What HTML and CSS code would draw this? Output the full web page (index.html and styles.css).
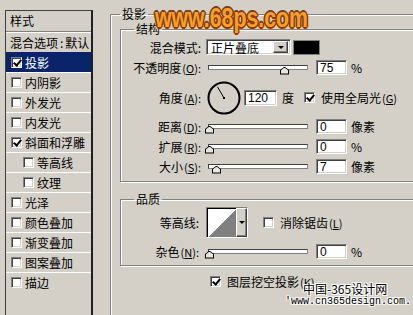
FILE: index.html
```html
<!DOCTYPE html>
<html lang="zh-CN">
<head>
    <meta charset="UTF-8">
    <title>图层样式 - 投影</title>
    <link rel="stylesheet" href="styles.css">
</head>
<body>
    <div class="dialog">
        <ul class="style-list">
            <li class="head">样式</li>
            <li class="item">混合选项<span class="colon">:</span>默认</li>
            <li class="item selected"><span class="check on"></span>投影</li>
            <li class="item"><span class="check"></span>内阴影</li>
            <li class="item"><span class="check"></span>外发光</li>
            <li class="item"><span class="check"></span>内发光</li>
            <li class="item"><span class="check on"></span>斜面和浮雕</li>
            <li class="item sub"><span class="check"></span>等高线</li>
            <li class="item sub"><span class="check"></span>纹理</li>
            <li class="item"><span class="check"></span>光泽</li>
            <li class="item"><span class="check"></span>颜色叠加</li>
            <li class="item"><span class="check"></span>渐变叠加</li>
            <li class="item"><span class="check"></span>图案叠加</li>
            <li class="item"><span class="check"></span>描边</li>
        </ul>

        <fieldset class="group">
            <legend>投影</legend>

            <fieldset class="box">
                <legend>结构</legend>
                <div class="row">
                    <span class="lbl">混合模式:</span>
                    <div class="select">
                        <span>正片叠底</span>
                        <span class="drop"><i class="arrow"></i></span>
                    </div>
                    <span class="swatch"></span>
                </div>
                <div class="row">
                    <span class="lbl">不透明度<span class="key">(<u>O</u>):</span></span>
                    <div class="slider"><span class="thumb" style="left: 71px"></span></div>
                    <span class="num">75</span>
                    <span class="unit">%</span>
                </div>
                <div class="row angle">
                    <span class="lbl">角度<span class="key">(<u>A</u>):</span></span>
                    <svg class="dial" width="34" height="34" viewBox="0 0 34 34">
                        <circle cx="17" cy="17" r="15.5" fill="none" stroke="#000" stroke-width="2"/>
                        <line x1="17" y1="17" x2="10.5" y2="5.8" stroke="#000" stroke-width="1"/>
                        <rect x="16" y="16" width="2" height="2" fill="#000"/>
                    </svg>
                    <span class="num wide">120</span>
                    <span class="unit deg">度</span>
                    <span class="check on global"></span>
                    <span class="opt">使用全局光<span class="key">(<u>G</u>)</span></span>
                </div>
                <div class="row">
                    <span class="lbl">距离<span class="key">(<u>D</u>):</span></span>
                    <div class="slider"><span class="thumb" style="left: -4px"></span></div>
                    <span class="num">0</span>
                    <span class="unit">像素</span>
                </div>
                <div class="row">
                    <span class="lbl">扩展<span class="key">(<u>R</u>):</span></span>
                    <div class="slider"><span class="thumb" style="left: -4px"></span></div>
                    <span class="num">0</span>
                    <span class="unit">%</span>
                </div>
                <div class="row">
                    <span class="lbl">大小<span class="key">(<u>S</u>):</span></span>
                    <div class="slider"><span class="thumb" style="left: 3px"></span></div>
                    <span class="num">7</span>
                    <span class="unit">像素</span>
                </div>
            </fieldset>

            <fieldset class="box quality">
                <legend>品质</legend>
                <div class="row contour-row">
                    <span class="lbl">等高线:</span>
                    <div class="contour">
                        <span class="curve"></span>
                        <span class="drop tall"><i class="arrow"></i></span>
                    </div>
                    <span class="check aa"></span>
                    <span class="opt">消除锯齿<span class="key">(<u>L</u>)</span></span>
                </div>
                <div class="row">
                    <span class="lbl">杂色<span class="key">(<u>N</u>):</span></span>
                    <div class="slider"><span class="thumb" style="left: -4px"></span></div>
                    <span class="num">0</span>
                    <span class="unit">%</span>
                </div>
            </fieldset>

            <div class="row knockout">
                <span class="check on"></span>
                <span class="opt">图层挖空投影<span class="key">(<u>K</u>)</span></span>
            </div>
        </fieldset>
    </div>

    <div class="mark-top">www.68ps.com</div>
    <div class="mark-bottom">
        <div class="cn">中国-365设计网</div>
        <div class="url">'www.cn365design.com.</div>
    </div>
</body>
</html>
```

FILE: styles.css
```css
* {
    box-sizing: border-box;
}
body {
    margin: 0;
    width: 413px;
    height: 315px;
    overflow: hidden;
    position: relative;
    background: #d4d0c8;
    font-family: "Noto Sans CJK SC", sans-serif;
    font-size: 12px;
    color: #000;
}
.dialog {
    display: flex;
    align-items: flex-start;
}

/* left style list */
.style-list {
    list-style: none;
    margin: 10px 0 0 5px;
    padding: 0;
    width: 88px;
    height: 320px;
    flex: none;
    border-top: 1px solid #404040;
    border-left: 1px solid #404040;
    border-right: 2px solid #202020;
}
.style-list li {
    display: flex;
    align-items: center;
    height: 20px;
    line-height: 1;
    border-top: 1px solid #fff;
    padding-left: 4px;
}
.style-list .head {
    height: 21px;
    border-top: 0;
    border-bottom: 1px solid #808080;
}
.style-list .item .check {
    margin: 0 3px 0 1px;
}
.style-list .sub {
    padding-left: 16px;
}
.style-list .selected {
    background: #0a246a;
    border-top-color: #0a246a;
    color: #fff;
}
.colon {
    margin: 0 2px;
}

/* checkbox */
.check {
    position: relative;
    width: 11px;
    height: 11px;
    flex: none;
    background: #fff;
    border: 1px solid;
    border-color: #808080 #fff #fff #808080;
    box-shadow: inset 1px 1px #404040, inset -1px -1px #d4d0c8;
}
.check.on::after {
    content: "";
    position: absolute;
    left: 3px;
    top: 0;
    width: 3px;
    height: 6px;
    border: solid #000;
    border-width: 0 2px 2px 0;
    transform: rotate(40deg);
}

/* group boxes */
fieldset {
    margin: 0;
    border: 1px solid #808080;
    box-shadow: inset 1px 1px #fff, 1px 1px #fff;
}
legend {
    padding: 0 2px;
    line-height: 14px;
}
.group {
    margin: 7px 0 0 17px;
    padding: 1px 0 60px 9px;
    width: 330px;
    flex: none;
}
.box {
    padding: 3px 0 7px 0;
}
.box legend {
    margin-left: 13px;
}
.quality {
    margin-top: 10px;
    padding: 1px 0 6px 0;
}

/* rows */
.row {
    display: flex;
    align-items: center;
    height: 16px;
    margin-top: 4px;
    white-space: nowrap;
}
.box .row:first-of-type {
    margin-top: 0;
}
.lbl {
    width: 80px;
    flex: none;
    text-align: right;
}
.key {
    font-size: 11px;
    margin-left: 1px;
}
.angle {
    height: 33px;
    margin-top: 6px;
}

.select {
    display: flex;
    align-items: center;
    justify-content: space-between;
    width: 85px;
    height: 16px;
    margin-left: 5px;
    padding: 0 2px 0 4px;
    background: #fff;
    border: 1px solid;
    border-color: #808080 #fff #fff #808080;
    box-shadow: inset 1px 1px #404040, inset -1px -1px #d4d0c8;
}
.drop {
    display: flex;
    align-items: center;
    justify-content: center;
    width: 15px;
    height: 12px;
    background: #d4d0c8;
    border: 1px solid;
    border-color: #fff #404040 #404040 #fff;
    box-shadow: inset -1px -1px #808080;
}
.arrow {
    width: 0;
    height: 0;
    border-left: 3px solid transparent;
    border-right: 3px solid transparent;
    border-top: 3px solid #000;
}
.swatch {
    width: 27px;
    height: 15px;
    margin-left: 2px;
    background: #000;
    border: 1px solid #808080;
}

.slider {
    position: relative;
    width: 100px;
    height: 5px;
    margin-left: 7px;
    background: #fff;
    border: 1px solid;
    border-color: #404040 #808080 #808080 #404040;
}
.thumb {
    position: absolute;
    top: 1px;
    width: 9px;
    height: 8px;
    background: #000;
    clip-path: polygon(50% 0, 100% 45%, 100% 100%, 0 100%, 0 45%);
}
.thumb::after {
    content: "";
    position: absolute;
    left: 1px;
    top: 1px;
    width: 7px;
    height: 6px;
    background: #e8e6e0;
    clip-path: polygon(50% 0, 100% 45%, 100% 100%, 0 100%, 0 45%);
}

.num {
    width: 31px;
    height: 15px;
    margin-left: 8px;
    padding: 1px 0 0 3px;
    background: #fff;
    border: 1px solid;
    border-color: #808080 #fff #fff #808080;
    box-shadow: inset 1px 1px #404040, inset -1px -1px #d4d0c8;
    font: 12px/12px "Liberation Sans", sans-serif;
}
.num.wide {
    width: 33px;
    height: 16px;
    margin-left: 3px;
}
.unit {
    margin-left: 4px;
}
.deg {
    margin-left: 5px;
}
.dial {
    margin-left: 6px;
    flex: none;
}
.global {
    margin-left: 10px;
}
.opt {
    margin-left: 6px;
}

/* quality */
.quality .lbl {
    width: 78px;
}
.contour-row {
    height: 31px;
    margin-top: 0;
}
.contour {
    display: flex;
    height: 31px;
    margin-left: 7px;
    border: 1px solid;
    border-color: #808080 #fff #fff #808080;
}
.curve {
    width: 29px;
    height: 29px;
    border-top: 1px solid #000;
    border-left: 1px solid #000;
    background: linear-gradient(to bottom right, #fff 50%, #808080 50%);
}
.drop.tall {
    width: 11px;
    height: 29px;
}
.aa {
    margin-left: 15px;
}
.quality .slider {
    margin-left: 9px;
}
.quality .row + .row {
    margin-top: 5px;
}
.knockout {
    height: 14px;
    margin-top: 8px;
    padding-left: 90px;
}

/* watermarks */
.mark-top {
    position: absolute;
    left: 155px;
    top: 2px;
    font: bold 28px/32px "Liberation Sans", sans-serif;
    color: #f5a02a;
    transform: scaleX(0.76);
    transform-origin: left top;
    text-shadow:
        2px 0 #8a3a06, -2px 0 #8a3a06, 0 2px #8a3a06, 0 -2px #8a3a06,
        1px 1px #8a3a06, -1px -1px #8a3a06, 1px -1px #8a3a06, -1px 1px #8a3a06,
        0 0 5px #e8c89a;
}
.mark-bottom {
    position: absolute;
    left: 285px;
    top: 282px;
    text-shadow: 1px 1px #fff, -1px -1px #fff, 1px -1px #fff, -1px 1px #fff;
}
.mark-bottom .cn {
    margin-left: 18px;
    font-size: 12px;
    line-height: 14px;
}
.mark-bottom .url {
    font: 10px/12px "Liberation Mono", monospace;
}
```
